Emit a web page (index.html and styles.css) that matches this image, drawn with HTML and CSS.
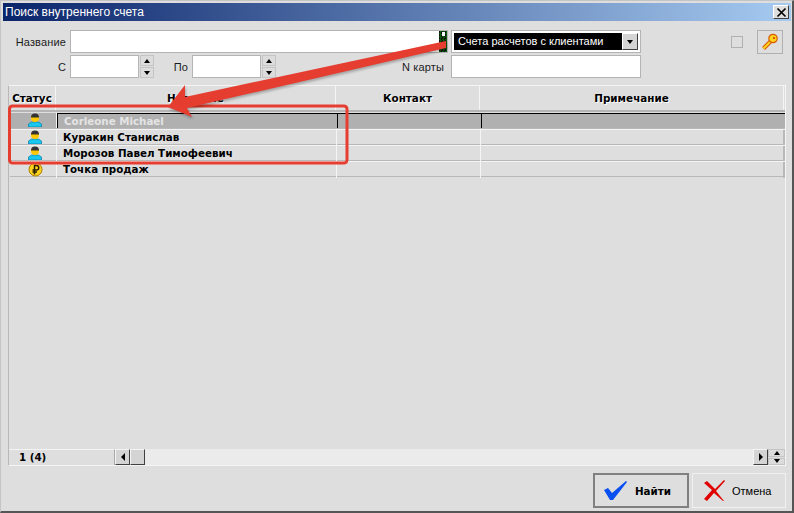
FILE: index.html
```html
<!DOCTYPE html>
<html lang="ru">
<head>
<meta charset="utf-8">
<title>Поиск внутреннего счета</title>
<link rel="stylesheet" href="styles.css">
</head>
<body>
<div class="window">
  <div class="titlebar">
    <span class="title">Поиск внутреннего счета</span>
    <button class="close"><svg width="11" height="11" viewBox="0 0 11 11"><path d="M1.5 1.5l8 8M9.5 1.5l-8 8" stroke="#000" stroke-width="1.7" fill="none"/></svg></button>
  </div>
  <div class="filters">
    <div class="row">
      <label class="lbl lbl-name">Название</label>
      <div class="input name-input"><span class="handle"></span></div>
      <div class="combo"><span class="combo-text">Счета расчетов с клиентами</span><span class="combo-btn"><i class="tri down"></i></span></div>
      <span class="check"></span>
      <button class="keybtn"><svg width="18" height="18" viewBox="0 0 18 18"><path d="M10 8L2.500 15.500" stroke="#d85a00" stroke-width="4" fill="none"/><path d="M10 8L2.500 15.500" stroke="#ffd21f" stroke-width="2" fill="none"/><circle cx="12" cy="5.500" r="4.200" fill="#ffd21f" stroke="#d85a00" stroke-width="1.200"/><rect x="12" y="4" width="2" height="2" fill="#d85a00"/></svg></button>
    </div>
    <div class="row row2">
      <label class="lbl lbl-c">С</label>
      <div class="input date"></div>
      <div class="spin"><span><i class="tri up"></i></span><span><i class="tri down"></i></span></div>
      <label class="lbl lbl-po">По</label>
      <div class="input date"></div>
      <div class="spin"><span><i class="tri up"></i></span><span><i class="tri down"></i></span></div>
      <label class="lbl lbl-card">N карты</label>
      <div class="input card"></div>
    </div>
  </div>
  <div class="table">
    <div class="thead">
      <div class="th">Статус</div><div class="th">Название</div><div class="th">Контакт</div><div class="th">Примечание</div>
    </div>
    <div class="tbody">
      <div class="tr selected">
        <div class="td icon"><svg viewBox="0 0 14 14" width="14" height="14"><use href="#u"/></svg></div>
        <div class="td name">Corleone Michael</div><div class="td"></div><div class="td"></div>
      </div>
      <div class="tr">
        <div class="td icon"><svg viewBox="0 0 14 14" width="14" height="14"><use href="#u"/></svg></div>
        <div class="td name">Куракин Станислав</div><div class="td"></div><div class="td"></div>
      </div>
      <div class="tr">
        <div class="td icon"><svg viewBox="0 0 14 14" width="14" height="14"><use href="#u"/></svg></div>
        <div class="td name">Морозов Павел Тимофеевич</div><div class="td"></div><div class="td"></div>
      </div>
      <div class="tr">
        <div class="td icon"><svg viewBox="0 0 15 15" width="15" height="15"><circle cx="7.500" cy="7.500" r="6.500" fill="#ffd21f" stroke="#b08000"/><path d="M6.500 12.500V3.500h2a2.200 2.200 0 0 1 0 4.500H4.500M4.500 10H9" stroke="#2a2000" stroke-width="1.500" fill="none"/></svg></div>
        <div class="td name">Точка продаж</div><div class="td"></div><div class="td"></div>
      </div>
    </div>
    <div class="tfoot">
      <div class="count">1 (4)</div>
      <span class="sbtn"><i class="tri left"></i></span>
      <span class="sbtn thumb"></span>
      <span class="track"></span>
      <span class="sbtn"><i class="tri right"></i></span>
      <div class="spin spin-foot"><span><i class="tri up"></i></span><span><i class="tri down"></i></span></div>
    </div>
  </div>
  <div class="actions">
    <button class="btn default"><svg width="24" height="20" viewBox="0 0 24 20"><path d="M0 9l4-2 4 5L22 0l1 1L9 19H6z" fill="#0a50f0"/></svg><b>Найти</b></button>
    <button class="btn cancel"><svg width="22" height="22" viewBox="0 0 22 22"><path d="M1 3l3-2 8 8 9-9 1 1-9 10 8 10-1 0-9-8-7 8-3-2 8-9z" fill="#e00000"/></svg><span>Отмена</span></button>
  </div>
</div>
<svg class="defs" width="0" height="0"><defs><g id="u"><path d="M.5 14v-3L3.500 9h7l3 2v3z" fill="#18c8f0" stroke="#0a7aa0" stroke-width=".7"/><circle cx="7" cy="5" r="4" fill="#ffc800"/><path d="M3 4.500A4 4 0 0 1 11 4.500z" fill="#333"/></g></defs></svg>
<svg class="overlay" width="794" height="513" viewBox="0 0 794 513">
  <rect x="9.500" y="106" width="337.500" height="57" rx="3" fill="none" stroke="#e53d30" stroke-width="3"/>
  <path class="arrow" d="M446 41L185 97L185 85L168 107L192 117L187 108L446 48z" fill="#e53d30"/>
</svg>
</body>
</html>
```
FILE: styles.css
```css
* { box-sizing: border-box; }
html, body { margin: 0; padding: 0; }
body { width: 794px; height: 513px; overflow: hidden; background: #dedede; position: relative; font-family: "Liberation Sans", Arial, sans-serif; font-size: 11px; color: #000; }
button { font: inherit; padding: 0; }
.window { width: 794px; height: 513px; padding: 3px 3px 0; border-left: 1px solid #c4c4c4; border-top: 1px solid #c4c4c4; border-bottom: 2px solid #555; border-right: 2px solid #555; background: #dedede; display: flex; flex-direction: column; }
.titlebar { height: 18px; margin: -1px -2px 0 -1px; background: linear-gradient(90deg, #0a246a, #a6caf0); display: flex; align-items: center; justify-content: space-between; padding: 0 2px 0 2px; flex: none; }
.title { color: #fff; font-size: 12px; }
.close { width: 16px; height: 14px; background: #dedede; border: 1px solid; border-color: #fff #404040 #404040 #fff; display: flex; align-items: center; justify-content: center; }
.filters { height: 64px; flex: none; position: relative; padding-top: 9px; }
.row { display: flex; align-items: center; height: 23px; }
.row2 { margin-top: 2px; }
.lbl { color: #1c1c1c; font-size: 11px; letter-spacing: .15px; white-space: nowrap; }
.lbl-name { width: 62px; text-align: right; margin-right: 4px; }
.input { background: #fff; border: 1px solid #b4b4b4; height: 23px; position: relative; }
.name-input { width: 378px; }
.handle { position: absolute; right: 0; top: 0; width: 8px; height: 21px; background: repeating-conic-gradient(#0a5a0a 0 25%, #111 0 50%) 0 0 / 3px 3px; }
.handle::after { content: ""; position: absolute; left: 3px; top: 1px; width: 3px; height: 4px; background: #fff; }
.combo { margin-left: 3px; width: 190px; height: 23px; background: #fff; border: 1px solid #b4b4b4; padding: 2px; display: flex; }
.combo-text { flex: 1; background: #000; color: #fff; font-size: 11px; line-height: 17px; padding-left: 4px; white-space: nowrap; }
.combo-btn { width: 16px; background: #d4d4d4; border: 1px solid; border-color: #fff #404040 #404040 #fff; display: flex; align-items: center; justify-content: center; }
.check { width: 12px; height: 12px; border: 1px solid #b0b0b0; margin-left: 90px; }
.keybtn { width: 26px; height: 24px; margin-left: 14px; background: #dedede; border: 1px solid #b0b0b0; display: flex; align-items: center; justify-content: center; }
.lbl-c { width: 62px; text-align: right; margin-right: 4px; }
.date { width: 69px; }
.spin { width: 14px; height: 23px; display: flex; flex-direction: column; margin-left: 1px; gap: 1px; }
.spin span { flex: 1; background: #dcdcdc; border: 1px solid #c4c4c4; display: flex; align-items: center; justify-content: center; }
.lbl-po { width: 34px; text-align: right; margin-right: 4px; }
.lbl-card { width: 62px; text-align: right; margin-left: 106px; margin-right: 7px; }
.card { width: 190px; }
.tri { display: block; width: 0; height: 0; border: 0 solid transparent; }
.tri.down { border-width: 4px 3.5px 0; border-top-color: #000; }
.tri.up { border-width: 0 3.5px 4px; border-bottom-color: #000; }
.tri.left { border-width: 4px 4px 4px 0; border-right-color: #000; }
.tri.right { border-width: 4px 0 4px 4px; border-left-color: #000; }
.table { margin-left: 4px; width: 778px; height: 381px; flex: none; border: 1px solid; border-color: #f4f4f4 #f4f4f4 #f4f4f4 #b8b8b8; display: flex; flex-direction: column; font-family: "DejaVu Sans", Verdana, sans-serif; }
.thead, .tr { display: grid; grid-template-columns: 47px 280px 144px 304px; }
.thead { height: 26px; flex: none; border-bottom: 2px solid #b4b4b4; }
.th { font-size: 10.400px; font-weight: bold; text-align: center; line-height: 24px; border-right: 1px solid #f4f4f4; text-shadow: 1px 1px 0 #fff; }
.tbody { flex: 1; padding: 1px 0 0 1px; }
.tr { height: 16px; border-top: 1px solid #f4f4f4; border-bottom: 1px solid #b8b8b8; }
.td { border-right: 1px solid #f4f4f4; font-size: 10.300px; line-height: 14px; font-weight: bold; }
.td:last-child { border-right: 2px solid #b8b8b8; }
.td.icon { display: flex; align-items: center; justify-content: center; padding: 0 0 1px 4px; }
.td.name { padding-left: 6px; }
.tr.selected { background: #b0b0b0; border-top: 0; }
.tr.selected .td { border-top: 1px solid #000; line-height: 14px; }
.tr.selected .td + .td { border-left: 1px solid #000; border-right: 0; }
.tr.selected .td.icon { border-top: 0; }
.tr.selected .name { color: #e4e4e4; }
.tfoot { height: 16px; flex: none; display: flex; align-items: stretch; }
.count { width: 106px; font-size: 10.300px; font-weight: bold; line-height: 15px; padding-left: 10px; border-right: 1px solid #aaa; border-top: 1px solid #f4f4f4; }
.sbtn { width: 15px; background: #d4d4d4; border: 1px solid; border-color: #f4f4f4 #404040 #404040 #f4f4f4; display: flex; align-items: center; justify-content: center; }
.track { flex: 1; background: #ebebeb; }
.spin-foot { width: 17px; height: 16px; margin: 0; }
.actions { flex: 1; display: flex; justify-content: flex-end; gap: 3px; padding: 7px 3px 0 0; }
.btn { width: 94px; height: 35px; background: #dedede; border: 1px solid #f0f0f0; display: flex; align-items: center; font-size: 11px; font-family: "Liberation Sans", Arial, sans-serif; }
.btn b { font-family: "DejaVu Sans", Verdana, sans-serif; font-size: 10.300px; }
.btn.default { width: 96px; border: 2px solid #808080; padding-left: 9px; gap: 7px; }
.btn.cancel { padding-left: 10px; gap: 7px; }
.defs { position: absolute; }
.overlay { position: absolute; left: 0; top: 0; pointer-events: none; }
.arrow { filter: drop-shadow(1px 2px 1px rgba(0,0,0,.25)); }
```
